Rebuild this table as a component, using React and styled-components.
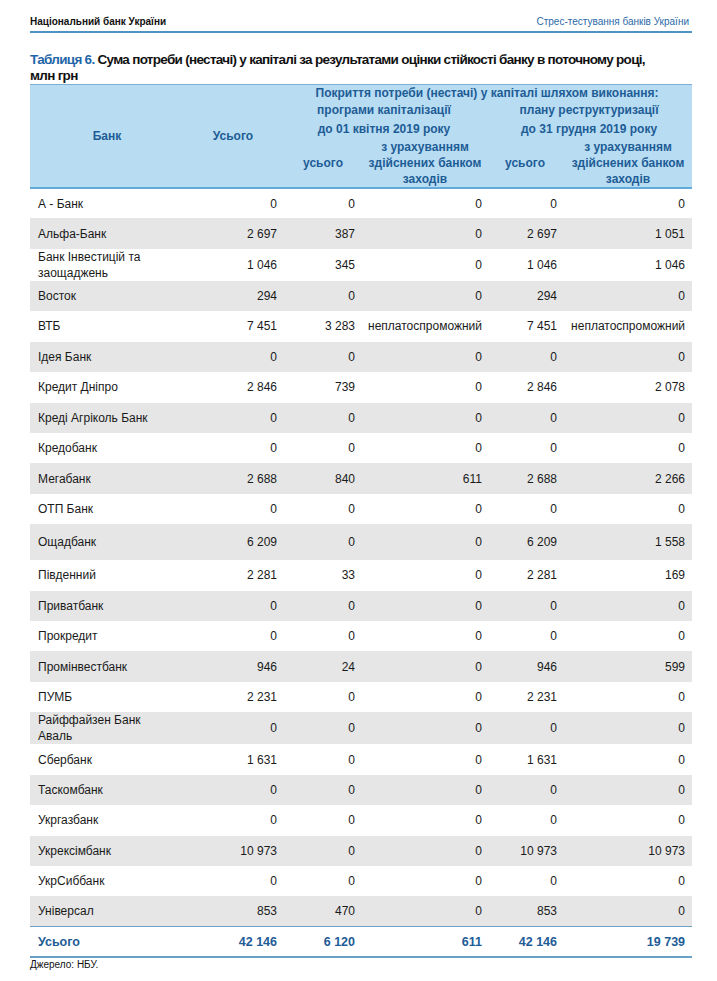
import React from "react";
import styled, { createGlobalStyle } from "styled-components";

const GlobalStyle = createGlobalStyle`
  html, body { margin: 0; padding: 0; background: #ffffff; }
  body { font-family: "Liberation Sans", Arial, sans-serif; color: #1a1a1a; }
`;

const Page = styled.div`
  width: 662px;
  padding: 16px 25px 0 30px;
`;

const TopBar = styled.div`
  display: flex;
  justify-content: space-between;
  align-items: flex-end;
  padding: 0 3px 3px 0;
  border-bottom: 2px solid #4f93c3;
  font-family: "Liberation Sans Narrow", "Liberation Sans", Arial, sans-serif;
  font-size: 10px;
  line-height: 12px;
`;

const Org = styled.span`
  font-weight: bold;
  color: #111;
`;

const Doc = styled.span`
  color: #2a6aa8;
`;

const Title = styled.h1`
  margin: 19px 0 0;
  font-size: 13.5px;
  letter-spacing: -0.7px;
  line-height: 16px;
  font-weight: bold;
  color: #111;
  white-space: nowrap;
`;

const TitleLabel = styled.span`
  color: #1f66a8;
`;

const Table = styled.table`
  width: 662px;
  border-collapse: collapse;
  table-layout: fixed;
  font-size: 12px;
`;

const Head = styled.thead`
  background: #b8dcf2;
  color: #1e5c96;
  font-weight: bold;
  border-top: 1px solid #7eafd2;
  border-bottom: 2px solid #62aadb;
`;

const HeadRow = styled.tr`
  height: ${(p) => p.$h}px;
`;

const Th = styled.th`
  padding: 0 4px;
  font-weight: bold;
  text-align: center;
  vertical-align: middle;
  line-height: ${(p) => p.$lh || 16}px;
`;

const BodyRow = styled.tr`
  height: ${(p) => p.$h}px;
  &:nth-child(even) { background: #e6e6e6; }
`;

const Name = styled.td`
  padding: 0 4px 0 8px;
  text-align: left;
  line-height: 16px;
  vertical-align: middle;
  color: #1a1a1a;
`;

const Num = styled.td`
  padding: 0 ${(p) => p.$pr}px 0 4px;
  text-align: right;
  vertical-align: middle;
  white-space: nowrap;
  color: #1a1a1a;
`;

const Foot = styled.tfoot`
  border-top: 1px solid #6aa0c6;
  border-bottom: 2px solid #6aa0c6;
`;

const TotalRow = styled.tr`
  height: 30px;
  td {
    color: #1e5c96;
    font-weight: bold;
    font-size: 12.5px;
  }
`;

const Source = styled.div`
  margin-top: 1px;
  font-family: "Liberation Sans Narrow", "Liberation Sans", Arial, sans-serif;
  font-size: 10px;
  line-height: 12px;
  color: #111;
`;

const PADS = [5, 9, 4, 7, 7];

const N = "неплатоспроможний";
const rows = [
  [["А - Банк"], "0", "0", "0", "0", "0"],
  [["Альфа-Банк"], "2 697", "387", "0", "2 697", "1 051"],
  [["Банк Інвестицій та", "заощаджень"], "1 046", "345", "0", "1 046", "1 046"],
  [["Восток"], "294", "0", "0", "294", "0"],
  [["ВТБ"], "7 451", "3 283", N, "7 451", N],
  [["Ідея Банк"], "0", "0", "0", "0", "0"],
  [["Кредит Дніпро"], "2 846", "739", "0", "2 846", "2 078"],
  [["Креді Агріколь Банк"], "0", "0", "0", "0", "0"],
  [["Кредобанк"], "0", "0", "0", "0", "0"],
  [["Мегабанк"], "2 688", "840", "611", "2 688", "2 266"],
  [["ОТП Банк"], "0", "0", "0", "0", "0"],
  [["Ощадбанк"], "6 209", "0", "0", "6 209", "1 558"],
  [["Південний"], "2 281", "33", "0", "2 281", "169"],
  [["Приватбанк"], "0", "0", "0", "0", "0"],
  [["Прокредит"], "0", "0", "0", "0", "0"],
  [["Промінвестбанк"], "946", "24", "0", "946", "599"],
  [["ПУМБ"], "2 231", "0", "0", "2 231", "0"],
  [["Райффайзен Банк", "Аваль"], "0", "0", "0", "0", "0"],
  [["Сбербанк"], "1 631", "0", "0", "1 631", "0"],
  [["Таскомбанк"], "0", "0", "0", "0", "0"],
  [["Укргазбанк"], "0", "0", "0", "0", "0"],
  [["Укрексімбанк"], "10 973", "0", "0", "10 973", "10 973"],
  [["УкрСиббанк"], "0", "0", "0", "0", "0"],
  [["Універсал"], "853", "470", "0", "853", "0"],
];

const total = ["42 146", "6 120", "611", "42 146", "19 739"];

const nb = (s) => s.replace(/ /g, "\u00a0");

function Lines({ lines }) {
  return lines.map((l, i) => (
    <React.Fragment key={i}>
      {i > 0 && <br />}
      {l}
    </React.Fragment>
  ));
}

export default function App() {
  return (
    <>
      <GlobalStyle />
      <Page>
        <TopBar>
          <Org>Національний банк України</Org>
          <Doc>Стрес-тестування банків України</Doc>
        </TopBar>
        <Title>
          <TitleLabel>Таблиця 6.</TitleLabel> Сума потреби (нестачі) у капіталі за
          результатами оцінки стійкості банку в поточному році,
          <br />
          млн грн
        </Title>
        <Table>
          <colgroup>
            <col style={{ width: 154 }} />
            <col style={{ width: 98 }} />
            <col style={{ width: 82 }} />
            <col style={{ width: 122 }} />
            <col style={{ width: 78 }} />
            <col style={{ width: 128 }} />
          </colgroup>
          <Head>
            <HeadRow $h={16}>
              <Th rowSpan={3}>Банк</Th>
              <Th rowSpan={3}>Усього</Th>
              <Th colSpan={4}>Покриття потреби (нестачі) у капіталі шляхом виконання:</Th>
            </HeadRow>
            <HeadRow $h={38}>
              <Th colSpan={2} $lh={19}>
                програми капіталізації
                <br />
                до 01 квітня 2019 року
              </Th>
              <Th colSpan={2} $lh={19}>
                плану реструктуризації
                <br />
                до 31 грудня 2019 року
              </Th>
            </HeadRow>
            <HeadRow $h={49}>
              <Th>усього</Th>
              <Th>
                з урахуванням
                <br />
                здійснених банком
                <br />
                заходів
              </Th>
              <Th>усього</Th>
              <Th>
                з урахуванням
                <br />
                здійснених банком
                <br />
                заходів
              </Th>
            </HeadRow>
          </Head>
          <tbody>
            {rows.map(([name, ...vals], i) => (
              <BodyRow key={i} $h={name[0] === "Ощадбанк" ? 36 : 30.43}>
                <Name>
                  <Lines lines={name} />
                </Name>
                {vals.map((v, j) => (
                  <Num key={j} $pr={PADS[j]}>
                    {nb(v)}
                  </Num>
                ))}
              </BodyRow>
            ))}
          </tbody>
          <Foot>
            <TotalRow>
              <Name>Усього</Name>
              {total.map((v, j) => (
                <Num key={j} $pr={PADS[j]}>
                  {nb(v)}
                </Num>
              ))}
            </TotalRow>
          </Foot>
        </Table>
        <Source>Джерело: НБУ.</Source>
      </Page>
    </>
  );
}
